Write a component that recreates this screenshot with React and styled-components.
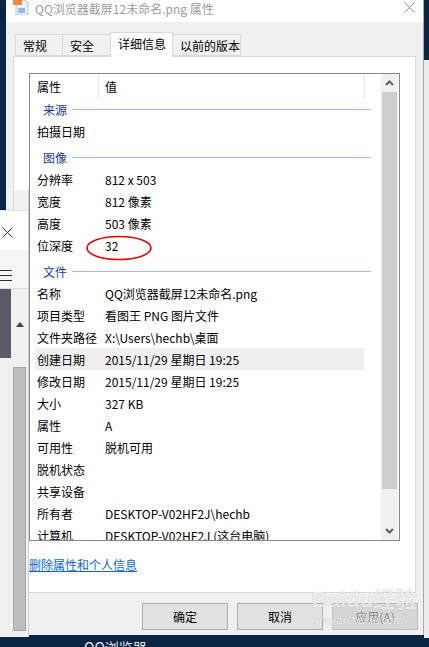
import React from 'react';
import styled, { createGlobalStyle } from 'styled-components';

const GlobalStyle = createGlobalStyle`
  html, body {
    margin: 0;
    padding: 0;
  }
  body {
    font-family: "Noto Sans CJK SC", "Liberation Sans", sans-serif;
    font-size: 12px;
    color: #000;
  }
`;

const Screen = styled.div`
  position: relative;
  width: 429px;
  height: 647px;
  overflow: hidden;
  background: #0c2545;
`;

const Dialog = styled.div`
  position: absolute;
  left: 6px;
  top: 0;
  width: 418px;
  height: 635px;
  background: #f0f0f0;
  border-right: 1px solid #a9a9a9;
  box-sizing: border-box;
  display: flex;
  flex-direction: column;
`;

const TitleBar = styled.div`
  height: 22px;
  background: #fff;
  display: flex;
  align-items: flex-start;
  padding-left: 7px;
  padding-right: 8px;
  box-sizing: border-box;
  .title {
    margin-left: 5px;
    line-height: 17px;
    color: #9b9b9b;
    white-space: nowrap;
    flex: 1;
  }
  .close {
    margin-top: 2px;
  }
`;

const Tabs = styled.div`
  display: flex;
  align-items: flex-end;
  margin-top: 9px;
  padding-left: 9px;
  height: 25px;
  position: relative;
  z-index: 2;
`;

const Tab = styled.div`
  box-sizing: border-box;
  width: ${(p) => p.w}px;
  height: ${(p) => (p.active ? 25 : 22)}px;
  margin-bottom: ${(p) => (p.active ? -1 : 0)}px;
  margin-left: ${(p) => (p.first ? 0 : -1)}px;
  border: 1px solid #d9d9d9;
  border-bottom: ${(p) => (p.active ? 'none' : '1px solid #d9d9d9')};
  background: ${(p) => (p.active ? '#fff' : '#f0f0f0')};
  padding-left: 7px;
  line-height: ${(p) => (p.active ? 22 : 21)}px;
  white-space: nowrap;
`;

const Panel = styled.div`
  margin-left: 7px;
  width: 403px;
  height: 537px;
  box-sizing: border-box;
  background: #fff;
  border: 1px solid #d9d9d9;
  display: flex;
  flex-direction: column;
`;

const ListFrame = styled.div`
  margin-left: 15px;
  margin-top: 16px;
  width: 371px;
  height: 468px;
  box-sizing: border-box;
  border: 1px solid #828790;
  display: flex;
`;

const ListArea = styled.div`
  width: 351px;
  overflow: hidden;
`;

const HeaderRow = styled.div`
  display: flex;
  height: 24px;
  align-items: center;
  .c1 {
    width: 68px;
    padding-left: 7px;
    box-sizing: border-box;
  }
  .c2 {
    width: 265px;
    padding-left: 6px;
    box-sizing: border-box;
  }
`;

const HeaderSep = styled.div`
  width: 1px;
  height: 24px;
  align-self: flex-end;
  background: #e5e5e5;
`;

const GroupRow = styled.div`
  display: flex;
  align-items: center;
  height: 22px;
  padding-top: ${(p) => (p.first ? 0 : 4)}px;
  padding-left: 13px;
  padding-right: 10px;
  color: #1e3a94;
  &::after {
    content: '';
    flex: 1;
    height: 1px;
    margin-left: 5px;
    background: #a6bae2;
  }
`;

const ItemRow = styled.div`
  display: flex;
  align-items: center;
  height: 22px;
  margin-left: 5px;
  width: 329px;
  background: ${(p) => (p.hl ? '#efefef' : 'transparent')};
  white-space: nowrap;
  .k {
    width: 63px;
    padding-left: 2px;
    box-sizing: border-box;
  }
  .v {
    padding-left: 7px;
  }
`;

const ScrollBar = styled.div`
  width: 17px;
  background: #f0f0f0;
  display: flex;
  flex-direction: column;
  align-items: center;
  .btn {
    height: 18px;
    width: 100%;
    display: flex;
    align-items: center;
    justify-content: center;
  }
  .thumb {
    width: 15px;
    height: 397px;
    background: #cdcdcd;
  }
  .track {
    flex: 1;
  }
`;

const Link = styled.a`
  margin-left: 15px;
  margin-top: 16px;
  line-height: 16px;
  color: #0a66cc;
  text-decoration: underline;
  align-self: flex-start;
`;

const ButtonRow = styled.div`
  display: flex;
  justify-content: flex-end;
  gap: 9px;
  margin-top: 10px;
  padding-right: 5px;
`;

const Button = styled.div`
  width: 86px;
  height: 27px;
  box-sizing: border-box;
  border: 1px solid ${(p) => (p.disabled ? '#bfbfbf' : '#adadad')};
  background: ${(p) => (p.disabled ? '#d6d6d6' : '#e1e1e1')};
  color: ${(p) => (p.disabled ? '#8c8c8c' : '#000')};
  display: flex;
  align-items: center;
  justify-content: center;
`;

const BackWindow = styled.div`
  position: absolute;
  left: 0;
  top: 190px;
  width: 29px;
  height: 447px;
  display: flex;
  flex-direction: column;
  border-right: 1px solid #d0d0d0;
  box-sizing: border-box;
  .strip {
    height: 20px;
    display: flex;
  }
  .strip span:last-child {
    flex: 1;
    background: #f0f0f0;
  }
  .strip span:first-child {
    width: 14px;
  }
`;

const CloseArea = styled.div`
  height: 40px;
  background: #fff;
  border-top: 1px solid #e3e3e3;
  box-sizing: border-box;
  padding: 13px 0 0 2px;
`;

const MenuArea = styled.div`
  height: 39px;
  background: #f6f6f6;
  border-bottom: 1px solid #dcdcdc;
  box-sizing: border-box;
  padding-top: 17px;
`;

const Lower = styled.div`
  flex: 1;
  display: flex;
  background: #f0f0f0;
  .dark {
    width: 11px;
    height: 69px;
    background: #5b5b66;
  }
  .bar {
    flex: 1;
    display: flex;
    flex-direction: column;
    align-items: center;
    padding-top: 33px;
  }
  .thumb {
    margin-top: 40px;
    width: 13px;
    height: 264px;
    box-sizing: border-box;
    background: #bdbdbd;
    border: 1px solid #a7a7a7;
  }
`;

const RightStrip = styled.div`
  position: absolute;
  left: 424px;
  top: 60px;
  width: 5px;
  height: 578px;
  background: #ececec;
`;

const TaskText = styled.div`
  position: absolute;
  left: 84px;
  top: 638px;
  color: #e6e6e6;
  font-size: 14px;
  line-height: 18px;
`;

const Ellipse = styled.svg`
  position: absolute;
  left: 85px;
  top: 234px;
`;

const Watermark = styled.div`
  position: absolute;
  left: 312px;
  top: 586px;
  color: rgba(255, 255, 255, 0.7);
  text-shadow: 0 0 1px rgba(140, 140, 140, 0.5);
  .big {
    font-family: "Liberation Sans", "Noto Sans CJK SC", sans-serif;
    font-size: 22px;
    font-weight: bold;
    line-height: 28px;
  }
  .small {
    font-family: "Liberation Sans", sans-serif;
    font-size: 11px;
    line-height: 12px;
    margin-left: 2px;
  }
`;

const groups = [
  { title: '来源', first: true, items: [['拍摄日期', '']] },
  {
    title: '图像',
    items: [
      ['分辨率', '812 x 503'],
      ['宽度', '812 像素'],
      ['高度', '503 像素'],
      ['位深度', '32'],
    ],
  },
  {
    title: '文件',
    items: [
      ['名称', 'QQ浏览器截屏12未命名.png'],
      ['项目类型', '看图王 PNG 图片文件'],
      ['文件夹路径', 'X:\\Users\\hechb\\桌面'],
      ['创建日期', '2015/11/29 星期日 19:25', true],
      ['修改日期', '2015/11/29 星期日 19:25'],
      ['大小', '327 KB'],
      ['属性', 'A'],
      ['可用性', '脱机可用'],
      ['脱机状态', ''],
      ['共享设备', ''],
      ['所有者', 'DESKTOP-V02HF2J\\hechb'],
      ['计算机', 'DESKTOP-V02HF2J (这台电脑)'],
    ],
  },
];

const FileIcon = () => (
  <svg width="17" height="15" viewBox="0 0 17 15">
    <path d="M3 0 H12 L15 3 V15 H3 Z" fill="#e9f1fa" stroke="#a9c3e0" />
    <rect x="0" y="0" width="9" height="5" fill="#f0883c" />
    <rect x="5" y="8" width="7" height="5" fill="#8fb8e2" />
  </svg>
);

const Caret = ({ down }) => (
  <svg width="9" height="6" viewBox="0 0 9 6">
    <polyline
      points={down ? '1,1 4.5,4.5 8,1' : '1,5 4.5,1.5 8,5'}
      fill="none"
      stroke="#606060"
      strokeWidth="2"
    />
  </svg>
);

const App = () => {
  return (
    <Screen>
      <GlobalStyle />
      <Dialog>
        <TitleBar>
          <FileIcon />
          <span className="title">QQ浏览器截屏12未命名.png 属性</span>
          <svg className="close" width="11" height="11" viewBox="0 0 11 11">
            <path d="M0.5 0.5 L10.5 10.5 M10.5 0.5 L0.5 10.5" stroke="#8a8a8a" />
          </svg>
        </TitleBar>
        <Tabs>
          <Tab first w={48}>常规</Tab>
          <Tab w={49}>安全</Tab>
          <Tab active w={63}>详细信息</Tab>
          <Tab w={69}>以前的版本</Tab>
        </Tabs>
        <Panel>
          <ListFrame>
            <ListArea>
              <HeaderRow>
                <span className="c1">属性</span>
                <HeaderSep />
                <span className="c2">值</span>
                <HeaderSep />
              </HeaderRow>
              {groups.map((g) => (
                <React.Fragment key={g.title}>
                  <GroupRow first={g.first}>{g.title}</GroupRow>
                  {g.items.map(([k, v, hl]) => (
                    <ItemRow key={k} hl={hl}>
                      <span className="k">{k}</span>
                      <span className="v">{v}</span>
                    </ItemRow>
                  ))}
                </React.Fragment>
              ))}
            </ListArea>
            <ScrollBar>
              <div className="btn">
                <Caret />
              </div>
              <div className="thumb" />
              <div className="track" />
              <div className="btn">
                <Caret down />
              </div>
            </ScrollBar>
          </ListFrame>
          <Link>删除属性和个人信息</Link>
        </Panel>
        <ButtonRow>
          <Button>确定</Button>
          <Button>取消</Button>
          <Button disabled>应用(A)</Button>
        </ButtonRow>
      </Dialog>

      <BackWindow>
        <div className="strip">
          <span />
          <span />
        </div>
        <CloseArea>
          <svg width="11" height="11" viewBox="0 0 11 11">
            <path d="M0.5 0.5 L10.5 10.5 M10.5 0.5 L0.5 10.5" stroke="#333" />
          </svg>
        </CloseArea>
        <MenuArea>
          <svg width="12" height="12" viewBox="0 0 12 12">
            <path d="M0 1.5 H12 M0 6.5 H12 M0 11.5 H12" stroke="#333" />
          </svg>
        </MenuArea>
        <Lower>
          <div className="dark" />
          <div className="bar">
            <svg width="8" height="5" viewBox="0 0 8 5">
              <polygon points="0,5 4,0 8,5" fill="#444" />
            </svg>
            <div className="thumb" />
          </div>
        </Lower>
      </BackWindow>

      <RightStrip />
      <TaskText>QQ浏览器</TaskText>

      <Ellipse width="68" height="28" viewBox="0 0 68 28">
        <ellipse cx="34" cy="14" rx="32" ry="11.5" fill="none" stroke="#e00000" strokeWidth="1.6" />
      </Ellipse>

      <Watermark>
        <div className="big">Baidu经验</div>
        <div className="small">jingyan.baidu.com</div>
      </Watermark>
    </Screen>
  );
};

export default App;
